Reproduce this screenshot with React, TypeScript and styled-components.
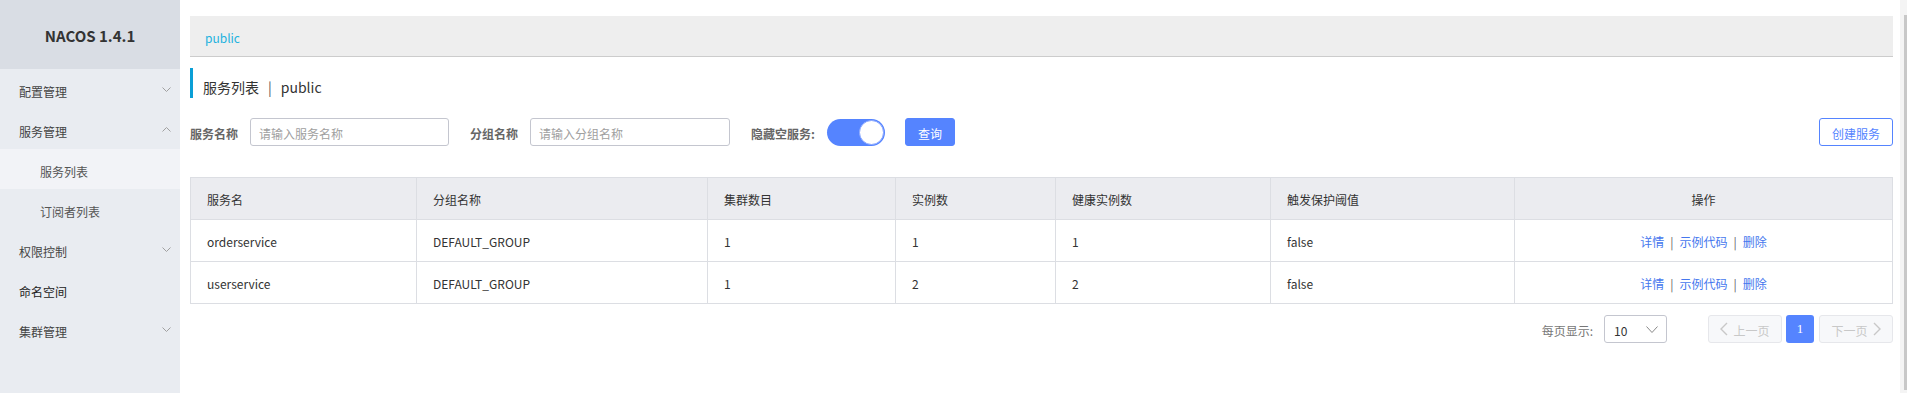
import React from 'react';
import styled, { createGlobalStyle } from 'styled-components';

const GlobalStyle = createGlobalStyle`
  html, body { margin: 0; padding: 0; }
  body {
    font-family: "Noto Sans CJK SC", "Noto Sans", sans-serif;
    font-size: 12px;
    color: #333;
    background: #fff;
  }
  * { box-sizing: border-box; }
`;

const Shell = styled.div`
  display: flex;
  height: 100vh;
  overflow: hidden;
`;

const Sidebar = styled.aside`
  width: 180px;
  flex: none;
  background: #e9ecf1;
  display: flex;
  flex-direction: column;
`;

const Brand = styled.div`
  height: 69px;
  flex: none;
  background: #d9dde4;
  display: flex;
  align-items: center;
  justify-content: center;
  font-weight: 700;
  font-size: 15px;
  color: #333;
  padding-top: 1px;
`;

const MenuItem = styled.div<{ $sub?: boolean; $active?: boolean }>`
  height: 40px;
  flex: none;
  display: flex;
  align-items: center;
  justify-content: space-between;
  padding: 0 9px 0 ${(p) => (p.$sub ? 40 : 19)}px;
  background: ${(p) => (p.$active ? '#f2f3f7' : 'transparent')};
  color: ${(p) => (p.$sub ? '#555' : '#444')};
  cursor: pointer;
`;

const MenuLabel = styled.span<{ $strong?: boolean }>`
  padding-top: 5px;
  font-size: 12px;
  line-height: 17px;
  color: ${(p) => (p.$strong ? '#222' : 'inherit')};
`;

const Main = styled.main`
  flex: 1;
  min-width: 0;
  height: 100vh;
  padding: 16px 7px 0 10px;
  display: flex;
  flex-direction: column;
`;

const ScrollTrack = styled.div`
  width: 7px;
  flex: none;
  background: #f4f4f4;
  display: flex;
  flex-direction: column;
  align-items: flex-end;
  padding: 15px 0 3px;
`;

const ScrollThumb = styled.div`
  width: 3px;
  flex: 1;
  background: #c8c8c8;
`;

const Breadcrumb = styled.div`
  height: 41px;
  flex: none;
  background: #eeeeee;
  border-bottom: 1px solid #cccccc;
  display: flex;
  align-items: center;
  padding: 3px 0 0 15px;
  font-size: 12px;
  color: #22b2de;
`;

const PageTitle = styled.h1`
  margin: 11px 0 0;
  height: 30px;
  flex: none;
  border-left: 3px solid #0a9fd6;
  padding: 7px 0 0 10px;
  display: flex;
  align-items: center;
  font-size: 14px;
  font-weight: 400;
  color: #333;
`;

const TitleSep = styled.span`
  margin: 0 9px;
  color: #555;
`;

const Toolbar = styled.div`
  margin-top: 20px;
  height: 28px;
  flex: none;
  display: flex;
  align-items: center;
`;

const FieldLabel = styled.label<{ $gap: number }>`
  font-size: 12px;
  font-weight: 700;
  color: #666;
  margin-right: ${(p) => p.$gap}px;
  padding-top: 2px;
`;

const TextInput = styled.input<{ $w: number }>`
  width: ${(p) => p.$w}px;
  height: 28px;
  border: 1px solid #c4c6cf;
  border-radius: 3px;
  padding: 2px 8px 0;
  font: inherit;
  font-size: 12px;
  color: #333;
  outline: none;
  margin-right: 21px;
  &::placeholder { color: #a0a0a0; }
`;

const Switch = styled.span`
  width: 58px;
  height: 27px;
  border-radius: 14px;
  background: #5584ff;
  display: flex;
  align-items: center;
  justify-content: flex-end;
  padding: 0 1px;
  margin-right: 20px;
`;

const Knob = styled.span`
  width: 25px;
  height: 25px;
  border-radius: 50%;
  background: #fff;
  border: 1px solid #8aa8ff;
`;

const Button = styled.button<{ $outline?: boolean }>`
  height: 28px;
  padding: 2px ${(p) => (p.$outline ? 12 : 12)}px 0;
  border-radius: 3px;
  border: 1px solid #5584ff;
  background: ${(p) => (p.$outline ? '#fff' : '#5584ff')};
  color: ${(p) => (p.$outline ? '#5584ff' : '#fff')};
  font: inherit;
  font-size: 12px;
  cursor: pointer;
`;

const Spacer = styled.div`
  flex: 1;
`;

const Table = styled.table`
  margin-top: 31px;
  width: 100%;
  border-collapse: collapse;
  table-layout: fixed;
  font-size: 12px;
  color: #333;
`;

const Th = styled.th<{ $center?: boolean }>`
  height: 42px;
  background: #ebecf0;
  border: 1px solid #dcdee3;
  font-weight: 400;
  text-align: ${(p) => (p.$center ? 'center' : 'left')};
  padding: 2px 16px 0;
`;

const Td = styled.td<{ $center?: boolean }>`
  height: 42px;
  border: 1px solid #dcdee3;
  text-align: ${(p) => (p.$center ? 'center' : 'left')};
  padding: 2px 16px 0;
  background: #fff;
`;

const OpLink = styled.a`
  color: #4577ee;
  text-decoration: none;
  cursor: pointer;
`;

const OpSep = styled.span`
  margin: 0 6px;
  color: #666;
`;

const Pager = styled.div`
  margin-top: 11px;
  height: 28px;
  flex: none;
  display: flex;
  justify-content: flex-end;
  align-items: center;
`;

const PagerLabel = styled.span`
  color: #777;
  margin-right: 11px;
  padding-top: 2px;
`;

const PageSize = styled.div`
  width: 63px;
  height: 28px;
  border: 1px solid #c4c6cf;
  border-radius: 3px;
  display: flex;
  align-items: center;
  justify-content: space-between;
  padding: 0 8px 0 9px;
  margin-right: 41px;
  color: #333;
`;

const PageSizeValue = styled.span`
  padding-top: 2px;
`;

const PageNav = styled.button`
  width: 74px;
  height: 28px;
  border: 1px solid #e6e7eb;
  border-radius: 3px;
  background: #f7f8fa;
  color: #c8c8c8;
  font: inherit;
  font-size: 12px;
  display: flex;
  align-items: center;
  justify-content: center;
  gap: 5px;
  padding: 0;
`;

const NavText = styled.span`
  padding-top: 2px;
`;

const PageCurrent = styled.button`
  width: 28px;
  height: 28px;
  margin: 0 5px 0 4px;
  border: none;
  border-radius: 3px;
  background: #5584ff;
  color: #fff;
  font-family: "Liberation Serif", serif;
  font-size: 13px;
  padding: 0;
`;

const Chevron = ({ dir, color = '#a0a0a0', w = 9, h = 5 }: { dir: 'up' | 'down'; color?: string; w?: number; h?: number }) => (
  <svg width={w} height={h} viewBox={`0 0 ${w} ${h}`} fill="none">
    <polyline
      points={dir === 'down' ? `0.5,0.5 ${w / 2},${h - 0.5} ${w - 0.5},0.5` : `0.5,${h - 0.5} ${w / 2},0.5 ${w - 0.5},${h - 0.5}`}
      stroke={color}
      strokeWidth="1"
    />
  </svg>
);

const SideChevron = ({ dir }: { dir: 'left' | 'right' }) => (
  <svg width="8" height="14" viewBox="0 0 8 14" fill="none">
    <polyline
      points={dir === 'left' ? '7,1 1,7 7,13' : '1,1 7,7 1,13'}
      stroke="#c8c8c8"
      strokeWidth="1.4"
    />
  </svg>
);

const menu: { label: string; sub?: boolean; active?: boolean; chevron?: 'up' | 'down'; strong?: boolean }[] = [
  { label: '配置管理', chevron: 'down' },
  { label: '服务管理', chevron: 'up' },
  { label: '服务列表', sub: true, active: true },
  { label: '订阅者列表', sub: true },
  { label: '权限控制', chevron: 'down' },
  { label: '命名空间', strong: true },
  { label: '集群管理', chevron: 'down' },
];

const columns = [
  { title: '服务名', width: 226 },
  { title: '分组名称', width: 291 },
  { title: '集群数目', width: 188 },
  { title: '实例数', width: 160 },
  { title: '健康实例数', width: 215 },
  { title: '触发保护阈值', width: 244 },
  { title: '操作', width: 378, center: true },
];

const rows = [
  ['orderservice', 'DEFAULT_GROUP', '1', '1', '1', 'false'],
  ['userservice', 'DEFAULT_GROUP', '1', '2', '2', 'false'],
];

export default function App() {
  return (
    <>
      <GlobalStyle />
      <Shell>
        <Sidebar>
          <Brand>NACOS 1.4.1</Brand>
          {menu.map((m) => (
            <MenuItem key={m.label} $sub={m.sub} $active={m.active}>
              <MenuLabel $strong={m.strong}>{m.label}</MenuLabel>
              {m.chevron && <Chevron dir={m.chevron} />}
            </MenuItem>
          ))}
        </Sidebar>
        <Main>
          <Breadcrumb>public</Breadcrumb>
          <PageTitle>
            服务列表<TitleSep>|</TitleSep>public
          </PageTitle>
          <Toolbar>
            <FieldLabel $gap={12}>服务名称</FieldLabel>
            <TextInput $w={199} placeholder="请输入服务名称" />
            <FieldLabel $gap={12}>分组名称</FieldLabel>
            <TextInput $w={200} placeholder="请输入分组名称" />
            <FieldLabel $gap={12}>隐藏空服务:</FieldLabel>
            <Switch>
              <Knob />
            </Switch>
            <Button>查询</Button>
            <Spacer />
            <Button $outline>创建服务</Button>
          </Toolbar>
          <Table>
            <colgroup>
              {columns.map((c) => (
                <col key={c.title} style={{ width: c.width }} />
              ))}
            </colgroup>
            <thead>
              <tr>
                {columns.map((c) => (
                  <Th key={c.title} $center={c.center}>
                    {c.title}
                  </Th>
                ))}
              </tr>
            </thead>
            <tbody>
              {rows.map((r) => (
                <tr key={r[0]}>
                  {r.map((v, i) => (
                    <Td key={i}>{v}</Td>
                  ))}
                  <Td $center>
                    <OpLink>详情</OpLink>
                    <OpSep>|</OpSep>
                    <OpLink>示例代码</OpLink>
                    <OpSep>|</OpSep>
                    <OpLink>删除</OpLink>
                  </Td>
                </tr>
              ))}
            </tbody>
          </Table>
          <Pager>
            <PagerLabel>每页显示:</PagerLabel>
            <PageSize>
              <PageSizeValue>10</PageSizeValue>
              <Chevron dir="down" color="#888" w={12} h={7} />
            </PageSize>
            <PageNav>
              <SideChevron dir="left" />
              <NavText>上一页</NavText>
            </PageNav>
            <PageCurrent>1</PageCurrent>
            <PageNav>
              <NavText>下一页</NavText>
              <SideChevron dir="right" />
            </PageNav>
          </Pager>
        </Main>
        <ScrollTrack>
          <ScrollThumb />
        </ScrollTrack>
      </Shell>
    </>
  );
}
